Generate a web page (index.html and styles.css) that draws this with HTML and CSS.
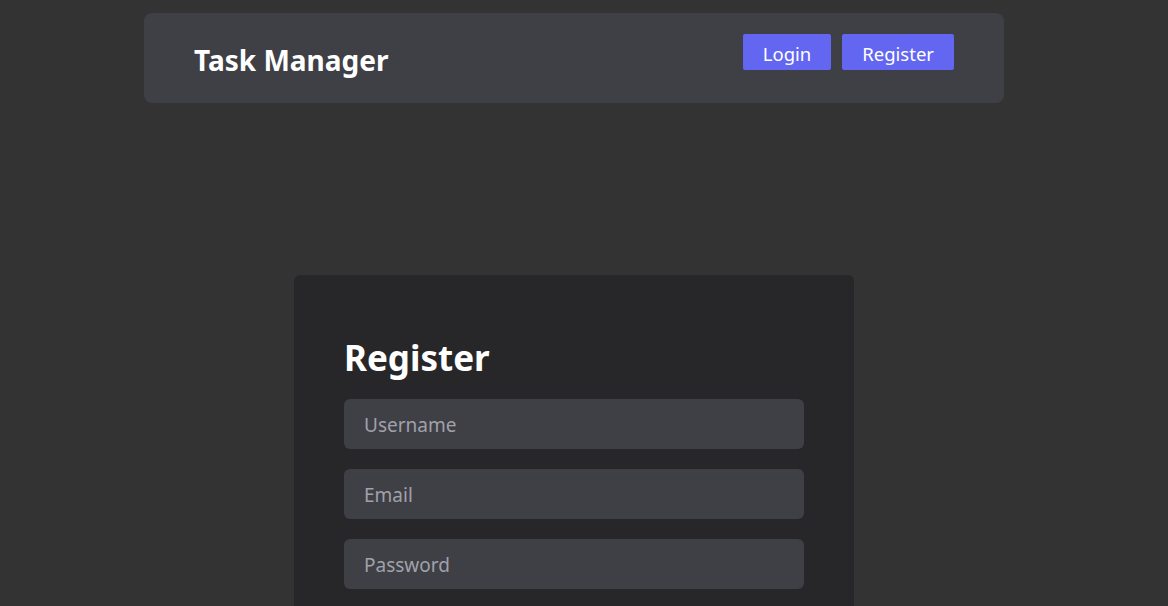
FILE: index.html
```html
<!DOCTYPE html>
<html lang="en">
<head>
<meta charset="utf-8">
<title>Task Manager</title>
<link rel="stylesheet" href="styles.css">
</head>
<body>
<div class="page">
  <nav class="navbar">
    <h1 class="brand">Task Manager</h1>
    <div class="nav-actions">
      <button class="btn">Login</button>
      <button class="btn">Register</button>
    </div>
  </nav>
  <main class="main">
    <section class="card">
      <h2 class="card-title">Register</h2>
      <form class="form">
        <input class="field" type="text" placeholder="Username">
        <input class="field" type="email" placeholder="Email">
        <input class="field" type="password" placeholder="Password">
      </form>
    </section>
  </main>
</div>
</body>
</html>
```
FILE: styles.css
```css
* { box-sizing: border-box; }
html, body { margin: 0; height: 100%; }
body {
  background: #333333;
  font-family: "Noto Sans", "Open Sans", sans-serif;
  color: #ffffff;
  overflow: hidden;
}
.page {
  width: 1148px;
  padding-top: 13px;
  display: flex;
  flex-direction: column;
  align-items: center;
}
.navbar {
  width: 860px;
  height: 90px;
  background: #3f3f46;
  border-radius: 8px;
  padding: 0 50px;
  display: flex;
  justify-content: space-between;
  align-items: flex-start;
}
.brand {
  margin: 0;
  padding-top: 28px;
  font-size: 28px;
  font-weight: 700;
  line-height: 38px;
}
.nav-actions {
  display: flex;
  gap: 11px;
  padding-top: 21px;
}
.btn {
  height: 36px;
  padding: 3px 20px 0;
  border: none;
  border-radius: 2px;
  background: #6366f1;
  color: #ffffff;
  font-family: inherit;
  font-size: 18.5px;
  line-height: 33px;
}
.main {
  margin-top: 172px;
}
.card {
  width: 560px;
  min-height: 400px;
  background: #27272a;
  border-radius: 6px;
  padding: 50px;
}
.card-title {
  margin: 8px 0 0;
  font-size: 35px;
  font-weight: 700;
  line-height: 50px;
}
.form {
  margin-top: 16px;
  display: flex;
  flex-direction: column;
  gap: 20px;
}
.field {
  width: 460px;
  height: 50px;
  border: none;
  border-radius: 6px;
  background: #3f3f46;
  padding: 2px 20px 0;
  font-family: inherit;
  font-size: 19px;
  color: #ffffff;
}
.field::placeholder { color: #a1a1aa; }
```
